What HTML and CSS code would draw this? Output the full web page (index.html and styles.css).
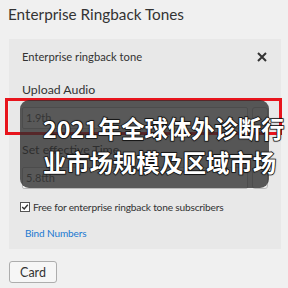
FILE: index.html
```html
<!DOCTYPE html>
<html lang="en">
<head>
    <meta charset="UTF-8">
    <meta name="viewport" content="width=device-width, initial-scale=1.0">
    <title>Enterprise Ringback Tones</title>
    <link rel="stylesheet" href="styles.css">
</head>

<body>
    <div class="page">
        <h1 class="page-title">Enterprise Ringback Tones</h1>

        <div class="panel">
            <div class="panel-head">
                <span>Enterprise ringback tone</span>
                <svg class="close" width="10" height="10" viewBox="0 0 10 10">
                    <path d="M1 1 L9 9 M9 1 L1 9" stroke="#333" stroke-width="2" fill="none"/>
                </svg>
            </div>

            <div class="field">
                <label class="field-label">Upload Audio</label>
                <div class="input-row">
                    <div class="input">1.9th</div>
                    <div class="input-btn"></div>
                </div>
            </div>

            <div class="field">
                <label class="field-label">Set effective Time</label>
                <div class="input-row">
                    <div class="input">5.8tth</div>
                    <div class="input-btn"></div>
                </div>
            </div>

            <label class="check">
                <svg class="check-box" width="10" height="10" viewBox="0 0 10 10">
                    <rect x="0.5" y="0.5" width="9" height="9" fill="#fff" stroke="#555"/>
                    <path d="M2.2 5 L4.2 7 L7.8 2.8" stroke="#333" stroke-width="1.4" fill="none"/>
                </svg>
                Free for enterprise ringback tone subscribers
            </label>

            <a href="#" class="link">Bind Numbers</a>
        </div>

        <button class="card-btn">Card</button>

        <div class="highlight"></div>
        <div class="caption-box"></div>
        <div class="caption">
            <p>2021年全球体外诊断行</p>
            <p>业市场规模及区域市场</p>
        </div>
    </div>
</body>
</html>
```

FILE: styles.css
```css
body {
    margin: 0;
    background: #f0f0f0;
    font-family: Lato, "Noto Sans", sans-serif;
    color: #333;
    overflow: hidden;
}

.page {
    position: relative;
    width: 288px;
    height: 288px;
    padding: 4px 7px 0 9px;
    box-sizing: border-box;
}

.page-title {
    margin: 0 0 0 -1px;
    font-size: 15.3px;
    font-weight: normal;
    line-height: 20px;
    color: #333;
}

.panel {
    margin-top: 15px;
    background: #e8e8e8;
    padding: 8px 13px 8px 13px;
    display: flex;
    flex-direction: column;
}

.panel-head {
    display: flex;
    justify-content: space-between;
    align-items: center;
    font-size: 11.2px;
    line-height: 20px;
    padding-right: 1px;
}

.field {
    display: flex;
    flex-direction: column;
    gap: 8px;
    margin-top: 14px;
}

.field + .field {
    margin-top: 12px;
}

.field-label {
    font-size: 12.3px;
    line-height: 18px;
    color: #333;
}

.input-row {
    display: flex;
    gap: 4px;
    height: 22px;
}

.input {
    flex: 1;
    background: #f4f4f4;
    border: 1px solid #b9b9b9;
    border-radius: 2px;
    font-size: 11px;
    line-height: 20px;
    padding-left: 3px;
    color: #555;
}

.input-btn {
    width: 14px;
    border: 1px solid #b9b9b9;
    border-radius: 3px;
    background: #eee;
}

.check {
    display: flex;
    align-items: center;
    gap: 3px;
    margin-top: 10px;
    margin-left: -2px;
    font-size: 10.2px;
    letter-spacing: -0.2px;
    line-height: 16px;
}

.link {
    margin-top: 10px;
    margin-left: 3px;
    font-size: 10px;
    letter-spacing: -0.1px;
    line-height: 16px;
    color: #1a78d0;
    text-decoration: none;
}

.card-btn {
    margin-top: 12px;
    width: 48px;
    height: 22px;
    background: #f6f6f6;
    border: 1px solid #adadad;
    border-radius: 3px;
    font-family: Lato, sans-serif;
    font-size: 12.5px;
    color: #333;
    padding: 0;
}

/* overlays */
.highlight {
    position: absolute;
    left: 5px;
    top: 98px;
    width: 271px;
    height: 31px;
    border: 3px solid #e8141c;
}

.caption-box {
    position: absolute;
    left: 20px;
    top: 100px;
    width: 249px;
    height: 88px;
    border-radius: 9px;
    background: rgba(45, 45, 45, 0.78);
}

.caption {
    position: absolute;
    left: 43px;
    top: 111px;
    white-space: nowrap;
    font-family: "Noto Sans CJK SC", sans-serif;
    font-weight: bold;
    font-size: 23.3px;
    color: #fff;
    -webkit-text-stroke: 1.5px #111;
    paint-order: stroke fill;
    text-shadow: 0 0 2px #000;
}

.caption p {
    margin: 0;
    line-height: 34px;
}
```
